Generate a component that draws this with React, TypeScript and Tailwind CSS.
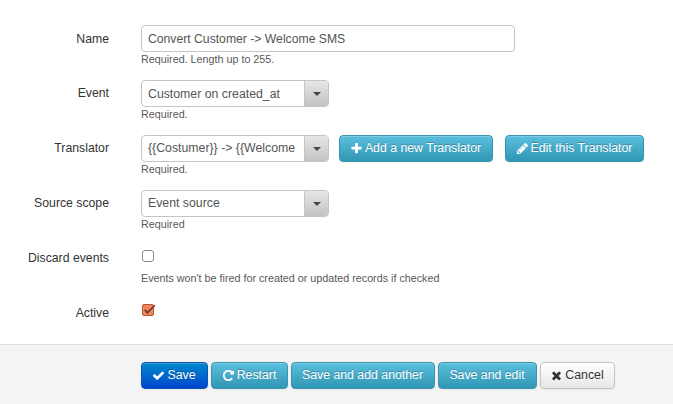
import React from "react";

const icons = {
  plus: "M1600 736v192q0 40-28 68t-68 28h-416v416q0 40-28 68t-68 28h-192q-40 0-68-28t-28-68v-416h-416q-40 0-68-28t-28-68v-192q0-40 28-68t68-28h416v-416q0-40 28-68t68-28h192q40 0 68 28t28 68v416h416q40 0 68 28t28 68z",
  check: "M1671 566q0 40-28 68l-724 724-136 136q-28 28-68 28t-68-28l-136-136-362-362q-28-28-28-68t28-68l136-136q28-28 68-28t68 28l294 295 656-657q28-28 68-28t68 28l136 136q28 28 28 68z",
  times: "M1490 1322q0 40-28 68l-136 136q-28 28-68 28t-68-28l-294-294-294 294q-28 28-68 28t-68-28l-136-136q-28-28-28-68t28-68l294-294-294-294q-28-28-28-68t28-68l136-136q28-28 68-28t68 28l294 294 294-294q28-28 68-28t68 28l136 136q28 28 28 68t-28 68l-294 294 294 294q28 28 28 68z",
  repeat: "M1664 256v448q0 26-19 45t-45 19h-448q-42 0-59-40-17-39 14-69l138-138q-148-137-349-137-104 0-198.5 40.5t-163.5 109.5-109.5 163.5-40.5 198.5 40.5 198.5 109.5 163.5 163.5 109.5 198.5 40.5q119 0 225-52t179-147q7-10 23-12 15 0 25 9l137 138q9 8 9.5 20.5t-7.5 22.5q-109 132-264 204.5t-327 72.5q-156 0-298-61t-245-164-164-245-61-298 61-298 164-245 245-164 298-61q147 0 284.5 55.5t244.5 156.5l130-129q29-31 70-14 39 17 39 59z",
  pencil: "M491 1536l91-91-235-235-91 91v107h128v128h107zm523-928q0-22-22-22-10 0-17 7l-542 542q-7 7-7 17 0 22 22 22 10 0 17-7l542-542q7-7 7-17zm-54-192l416 416-832 832h-416v-416zm683 96q0 53-37 90l-166 166-416-416 166-165q36-38 90-38 53 0 91 38l235 234q37 39 37 91z",
};

function Icon({ name }: { name: keyof typeof icons }) {
  return (
    <svg viewBox="0 0 1792 1792" className="mt-px mr-[2px] size-[13px] shrink-0 fill-current">
      <path d={icons[name]} />
    </svg>
  );
}

const tones = {
  info: "border-[#3a94af] bg-linear-to-b from-[#5bc0de] to-[#2f96b4] text-white [text-shadow:0_-1px_0_rgba(0,0,0,0.25)]",
  primary: "border-[#0a55b4] bg-linear-to-b from-[#0088cc] to-[#0044cc] text-white [text-shadow:0_-1px_0_rgba(0,0,0,0.25)]",
  plain: "border-[#c5c5c5] bg-linear-to-b from-white to-[#e6e6e6] text-[#333333] [text-shadow:0_1px_1px_rgba(255,255,255,0.75)]",
};

function Button({ tone = "info", icon, width, children }: { tone?: keyof typeof tones; icon?: keyof typeof icons; width: string; children: string }) {
  return (
    <button
      className={`flex h-[27px] shrink-0 items-center justify-center rounded-[4px] border pr-px pb-px text-[12.3px] leading-[18px] whitespace-nowrap shadow-[inset_0_1px_0_rgba(255,255,255,0.2),0_1px_2px_rgba(0,0,0,0.05)] ${tones[tone]} ${width}`}
    >
      {icon && <Icon name={icon} />}
      <span>{children}</span>
    </button>
  );
}

function Select({ value, leading = "leading-[25px]" }: { value: string; leading?: string }) {
  return (
    <div className="flex h-[27px] w-[188px] shrink-0 overflow-hidden rounded-[4px] border border-[#c5c5c5] bg-white">
      <div className={`min-w-0 flex-1 pr-[5px] pl-[6px] text-[12.3px] text-[#555555] ${leading}`}>
        <div className="overflow-hidden whitespace-nowrap">{value}</div>
      </div>
      <div className="flex w-[24px] items-center justify-center border-l border-[#c5c5c5] bg-linear-to-b from-[#e6e6e6] to-[#c3c3c3]">
        <span className="ml-px border-x-[4px] border-t-[4px] border-x-transparent border-t-[#444444]" />
      </div>
    </div>
  );
}

interface RowProps {
  label: string;
  help?: string;
  labelPad?: string;
  children: React.ReactNode;
}

function Row({ label, help, labelPad = "pt-[4px]", children }: RowProps) {
  return (
    <div className="flex h-[55px]">
      <div className={`w-[109px] shrink-0 text-right text-[12.25px] leading-[18px] text-[#333333] ${labelPad}`}>{label}</div>
      <div className="ml-[32px] flex-1">
        {children}
        {help && <div className="text-[10.75px] leading-[14px] text-[#595959]">{help}</div>}
      </div>
    </div>
  );
}

export default function App() {
  return (
    <div className="flex h-[404px] w-[673px] flex-col overflow-hidden bg-white font-['Liberation_Sans',Arial,sans-serif]">
      <div className="h-[344px] pt-[25px]">
        <Row label="Name" help="Required. Length up to 255." labelPad="pt-[5px]">
          <div className="h-[27px] w-[374px] rounded-[4px] border border-[#c5c5c5] px-[6px] text-[12.2px] leading-[27px] text-[#555555]">
            Convert Customer -&gt; Welcome SMS
          </div>
        </Row>
        <Row label="Event" help="Required.">
          <Select value="Customer on created_at" leading="leading-[27px]" />
        </Row>
        <Row label="Translator" help="Required.">
          <div className="flex">
            <Select value="{{Costumer}} -> {{Welcome SMS}}" />
            <div className="ml-[10px] flex gap-[12px]">
              <Button icon="plus" width="w-[154px]">Add a new Translator</Button>
              <Button icon="pencil" width="w-[139px]">Edit this Translator</Button>
            </div>
          </div>
        </Row>
        <Row label="Source scope" help="Required">
          <Select value="Event source" />
        </Row>
        <Row label="Discard events" help="Events won't be fired for created or updated records if checked">
          <div className="flex h-[26px] pt-[5px] pl-px">
            <span className="size-[12px] rounded-[3px] border border-[#888888] bg-white" />
          </div>
        </Row>
        <Row label="Active">
          <div className="flex h-[27px] pt-[4px] pl-px">
            <svg viewBox="0 0 14 13" className="h-[13px] w-[14px]">
              <rect x="0.5" y="0.5" width="11" height="11" rx="1.5" fill="#f28658" stroke="#b05a3c" />
              <path d="M2.8 5.6 5.3 8.8 12.9 1.2" fill="none" stroke="#6b3424" strokeWidth="1.6" />
            </svg>
          </div>
        </Row>
      </div>
      <div className="flex flex-1 gap-[3px] border-t border-[#dddddd] bg-[#f4f4f4] pt-[17px] pl-[141px]">
        <Button tone="primary" icon="check" width="w-[67px]">Save</Button>
        <Button icon="repeat" width="w-[77px]">Restart</Button>
        <Button width="w-[144px]">Save and add another</Button>
        <Button width="w-[99px]">Save and edit</Button>
        <Button tone="plain" icon="times" width="w-[75px]">Cancel</Button>
      </div>
    </div>
  );
}
